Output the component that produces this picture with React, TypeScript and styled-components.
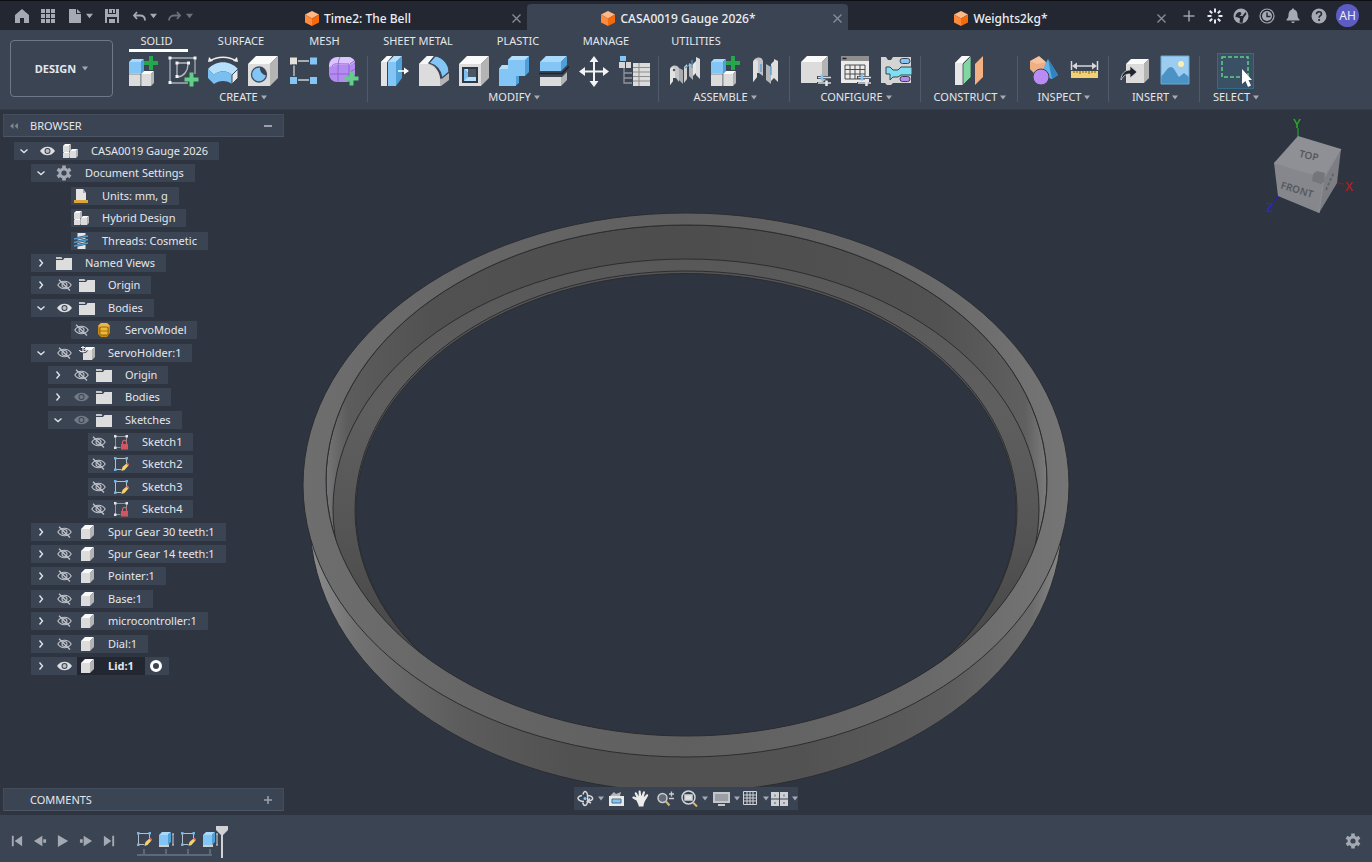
import React from "react";
import styled, { createGlobalStyle, css } from "styled-components";

const c = {
  title: "#222732",
  bar: "#3b4453",
  barLine: "#4c5667",
  stage: "#2e3440",
  text: "#e4e7ec",
  dim: "#a4a9b3",
  blue: "#83c6f6",
  mid: "#dcdcdc",
  shade: "#b4b4b4",
  green: "#5fd086",
};

const GlobalStyle = createGlobalStyle`
  * { box-sizing: border-box; }
  html, body { margin: 0; padding: 0; background: ${c.stage}; }
  body {
    font-family: "Noto Sans", "Open Sans", sans-serif;
    font-size: 12px;
    line-height: 16px;
    color: ${c.text};
  }
  button { font: inherit; color: inherit; background: none; border: 0; padding: 0; cursor: pointer; }
  svg { display: block; flex: none; }
`;

/* ---------- layout ---------- */

const Page = styled.div`
  display: flex;
  flex-direction: column;
  min-height: 100vh;
  overflow: hidden;
`;

const TitleBar = styled.header`
  display: flex;
  height: 30px;
  background: ${c.title};
  border-top: 1px solid #0c0e13;
`;

const QuickAccess = styled.div`
  display: flex;
  align-items: center;
  width: 207px;
  padding-left: 11px;
`;

const TitleButton = styled.button<{ $w: number; $dim?: boolean }>`
  display: flex;
  align-items: center;
  justify-content: center;
  gap: 4px;
  width: ${(p) => p.$w}px;
  height: 28px;
  color: ${(p) => (p.$dim ? "#6c717c" : c.dim)};
`;

const DocTabs = styled.nav`
  flex: 1;
  display: grid;
  grid-template-columns: 320fr 321fr 324fr;
  padding-top: 3px;
`;

const DocTab = styled.div<{ $active?: boolean }>`
  display: flex;
  align-items: center;
  padding-right: 4px;
  color: #eceef2;
  font-weight: 500;
  border-radius: 4px 4px 0 0;
  background: ${(p) => (p.$active ? c.bar : "transparent")};
`;

const DocTitle = styled.button`
  flex: 1;
  display: flex;
  align-items: center;
  justify-content: center;
  gap: 5px;
  padding-top: 3px;
`;

const CloseButton = styled.button`
  width: 14px;
  height: 16px;
  margin-top: 2px;
  display: flex;
  align-items: center;
  justify-content: center;
  color: #868b95;
`;

const Account = styled.div`
  display: flex;
  align-items: center;
  width: 200px;
  padding-left: 4px;
`;

const Avatar = styled.button`
  width: 23px;
  height: 23px;
  margin-left: 4px;
  border-radius: 50%;
  background: #5c5cc4;
  color: #eeeefc;
  text-align: center;
`;

const Ribbon = styled.section`
  display: flex;
  height: 80px;
  background: ${c.bar};
  border-bottom: 1px solid #343c49;
`;

const WorkspaceButton = styled.button`
  width: 103px;
  height: 57px;
  margin: 10px 4px 0 10px;
  border: 1px solid #6d7888;
  border-radius: 4px;
  display: flex;
  align-items: center;
  justify-content: center;
  gap: 6px;
  font-size: 11px;
  font-weight: 700;
`;

const RibbonMain = styled.div`
  flex: 1;
  min-width: 0;
`;

const RibbonTabs = styled.nav`
  display: flex;
  height: 22px;
  padding-left: 12px;
  gap: 16px;
`;

const RibbonTab = styled.button<{ $w: number; $active?: boolean }>`
  width: ${(p) => p.$w}px;
  font-size: 11px;
  line-height: 16px;
  padding: 3px 4px 0 0;
  border-bottom: 3px solid ${(p) => (p.$active ? "#ffffff" : "transparent")};
`;

const ToolGroups = styled.div`
  display: flex;
  padding-top: 1px;
`;

const ToolGroup = styled.div<{ $pad?: number }>`
  padding: 0 ${(p) => (p.$pad ?? 5) - 1}px 0 ${(p) => (p.$pad ?? 5) + 1}px;
  border-right: 1px solid transparent;
  background: linear-gradient(#505a6a, #505a6a) right 3px / 1px 46px no-repeat;
  background-origin: border-box;
  &:last-child { background: none; }
`;

const ToolRow = styled.div`
  display: flex;
`;

const ToolButton = styled.button<{ $active?: boolean }>`
  width: 40px;
  height: 36px;
  display: flex;
  align-items: center;
  justify-content: center;
  ${(p) =>
    p.$active &&
    css`
      width: 37px;
      margin: 0 2px 0 1px;
      background: #3a5165;
      border: 1px solid #316b87;
    `}
`;

const GroupLabel = styled.div`
  margin: 0 -20px;
`;

const GroupMenu = styled.button`
  display: flex;
  align-items: center;
  justify-content: center;
  gap: 3px;
  width: 100%;
  font-size: 11px;
  line-height: 16px;
  white-space: nowrap;
`;

const Workspace = styled.main`
  position: relative;
  flex: 1;
  display: flex;
  flex-direction: column;
  justify-content: space-between;
  min-height: 705px;
  padding: 4px 4px 4px 3px;
  background: ${c.stage};
`;

const Model = styled.svg`
  position: absolute;
  inset: 0;
  width: 100%;
  height: 100%;
`;

const ViewCube = styled.svg`
  position: absolute;
  top: 0;
  right: 0;
`;

const NavBar = styled.div`
  position: absolute;
  left: 50%;
  bottom: 5px;
  transform: translateX(-50%);
  display: flex;
  align-items: center;
  height: 23px;
  background: #3a4352;
`;

const NavButton = styled.button<{ $w: number }>`
  width: ${(p) => p.$w}px;
  height: 23px;
  display: flex;
  align-items: center;
  justify-content: center;
  gap: 4px;
`;

const SidePanel = styled.aside`
  position: relative;
  width: 281px;
`;

const PanelHeader = styled.div`
  display: flex;
  align-items: center;
  height: 23px;
  padding: 0 11px 0 6px;
  background: ${c.bar};
  border: 1px solid #434d5d;
  border-bottom-color: ${c.barLine};
`;

const PanelTitle = styled.h2`
  flex: 1;
  margin: 0 0 0 12px;
  font-size: 11px;
  font-weight: 400;
`;

const PanelButton = styled.button`
  width: 8px;
  height: 16px;
  display: flex;
  align-items: center;
  justify-content: center;
  color: #9aa1ad;
`;

const PanelSpacer = styled.span`
  width: 8px;
`;

const Tree = styled.ul`
  list-style: none;
  padding: 0;
  display: flex;
  flex-direction: column;
  justify-content: space-between;
  min-height: 533px;
  margin: 5px 0 0;
  font-size: 11px;
`;

const Row = styled.li<{ $level: number; $leaf?: boolean }>`
  display: flex;
  align-items: stretch;
  gap: 3px;
  width: max-content;
  height: 18px;
  margin-left: ${(p) => 11 + p.$level * 17 + (p.$leaf ? 23 : 0)}px;
  background: ${c.bar};
`;

const Cell = styled.button`
  width: 20px;
  display: flex;
  align-items: center;
  justify-content: center;
`;

const Item = styled.button<{ $active?: boolean }>`
  display: flex;
  align-items: center;
  padding-right: 11px;
  white-space: nowrap;
  line-height: 18px;
  ${(p) =>
    p.$active &&
    css`
      background: ${c.title};
      font-weight: 700;
    `}
`;

const ItemIcon = styled.span`
  width: 20px;
  margin-right: 11px;
  display: flex;
  justify-content: center;
`;

const ActivateRadio = styled.input`
  appearance: none;
  align-self: center;
  width: 12px;
  height: 12px;
  margin: 0 7px 0 2px;
  border: 3px solid #ffffff;
  border-radius: 50%;
`;

const Timeline = styled.footer`
  display: flex;
  height: 47px;
  padding: 0 8px 0 5px;
  background: ${c.bar};
`;

const PlayButton = styled.button`
  width: 23px;
  height: 24px;
  margin-top: 14px;
  display: flex;
  align-items: center;
  justify-content: center;
  color: ${c.dim};
`;

const Features = styled.div`
  position: relative;
  flex: 1;
  display: flex;
  align-items: flex-start;
  height: 25px;
  margin: 16px 0 0 13px;
  background: linear-gradient(#5d6878, #5d6878) 4px 100% / 75px 2px no-repeat;
`;

const FeatureButton = styled.button`
  width: 22px;
  height: 24px;
  display: flex;
  flex-direction: column;
  align-items: center;
  &::after {
    content: "";
    width: 2px;
    height: 6px;
    margin-top: 2px;
    background: #5d6878;
  }
`;

const Marker = styled.svg`
  position: absolute;
  left: 83px;
  top: -5px;
`;

/* ---------- small glyphs ---------- */

const Caret = ({ s = 6, color = "#a4a9b3" }: { s?: number; color?: string }) => (
  <svg width={s} height={s - 1} viewBox="0 0 6 5"><path d="M0 0.5h6L3 4.5z" fill={color} /></svg>
);

const Plus = ({ x, y, color = c.green, r = 7, t = 2 }: { x: number; y: number; color?: string; r?: number; t?: number }) => (
  <path
    d={`M${x - t} ${y - r}h${2 * t}v${r - t}h${r - t}v${2 * t}h${-(r - t)}v${r - t}h${-2 * t}v${-(r - t)}h${-(r - t)}v${-2 * t}h${r - t}z`}
    fill={color}
  />
);

type BoxProps = { x: number; y: number; w: number; h: number; d: number; blue?: boolean };
const Box = ({ x, y, w, h, d, blue }: BoxProps) => (
  <g>
    <path d={`M${x} ${y + d}h${w - d}v${h - d}h${d - w}z`} fill={blue ? c.blue : c.mid} />
    <path d={`M${x} ${y + d}l${d} ${-d}h${w - d}l${-d} ${d}z`} fill={blue ? "#a9dafb" : "#fafafa"} />
    <path d={`M${x + w - d} ${y + d}l${d} ${-d}v${h - d}l${-d} ${d}z`} fill={blue ? "#4f9fd8" : c.shade} />
  </g>
);

const Tool = ({ children }: { children: React.ReactNode }) => (
  <svg width="32" height="32" viewBox="0 0 32 32">{children}</svg>
);

const OrangeCube = () => (
  <svg width="14" height="15" viewBox="0 0 14 15">
    <path d="M7 0l7 3.5L7 7.5 0 3.5z" fill="#ffb987" />
    <path d="M0 3.5l7 4V15l-7-3.500z" fill="#ff8a3c" />
    <path d="M14 3.5l-7 4V15l7-3.500z" fill="#f56a0b" />
  </svg>
);

const CloseIcon = () => (
  <svg width="9" height="9" viewBox="0 0 9 9"><path d="M.5 .5l8 8M8.500 .5l-8 8" stroke="currentColor" strokeWidth="1.400" /></svg>
);

/* ---------- ribbon icons ---------- */

const NewComponent = () => (
  <Tool>
    <Box x={2} y={4} w={15} h={15} d={3} blue />
    <Box x={2} y={18} w={12} h={13} d={1} />
    <Box x={14} y={16} w={13} h={15} d={3} />
    <path d="M2 19h12M14 19v12" stroke="#6a7280" strokeWidth=".8" />
    <Plus x={24} y={8} color="#25a84c" />
  </Tool>
);

const SketchTool = () => (
  <Tool>
    <path d="M3 3v25h18M3 3h25v16" fill="none" stroke="#a9adb5" strokeWidth="1.300" />
    <path d="M10 8v13M10 8h12M21 9c0 7-4 12-10 13" fill="none" stroke="#b7bbc1" strokeWidth="1.300" />
    <g fill="#f4f4f4">
      <path d="M1.500 1.500h3v3h-3zM26.500 1.500h3v3h-3zM1.500 26h3v3h-3zM8.500 6.500h3v3h-3zM20 6.500h3v3h-3zM8.500 20h3v3h-3z" />
    </g>
    <Plus x={24.5} y={24.5} />
  </Tool>
);

const Revolve = () => (
  <Tool>
    <path d="M3 6C10 1 22 1 29 6" fill="none" stroke="#eee" strokeWidth="1.300" />
    <path d="M1 7l1-5 4 4zM31 7l-1-5-4 4z" fill="#eee" />
    <path d="M1 14C9 5 23 5 31 14l-6 6c-5-5-13-5-18 0z" fill="#b5dffb" />
    <path d="M1 14l6 6v9l-6-6zM7 20c5-5 13-5 18 0v9c-5-4-13-4-18 0z" fill="#79bff2" />
    <path d="M25 20l6-6v9l-6 6z" fill="#e8e8e8" stroke="#3b4453" strokeWidth="1" />
  </Tool>
);

const Hole = () => (
  <Tool>
    <Box x={1} y={1} w={30} h={30} d={8} />
    <circle cx="12" cy="19.500" r="7.500" fill={c.blue} stroke="#46505f" strokeWidth="1.300" />
    <path d="M13 12.100A7.500 7.500 0 0 1 19.400 20.500C15 20 12.500 16 13 12.100z" fill="#3b4453" />
  </Tool>
);

const Pattern = () => (
  <Tool>
    <path d="M7 6h20M7 25h20M7 6v19" stroke="#d0d0d0" strokeWidth="1.300" />
    <path d="M3 2.500h7v7H3z" fill="#e4e0dc" />
    <path d="M23 2.500h7v7h-7zM3 22h7v7H3zM23 22h7v7h-7z" fill={c.blue} />
    <path d="M10.500 4v4M22.500 4v4M10.500 23v4M22.500 23v4M5 10h4M5 21.500h4" stroke="#3b4453" strokeWidth="1" />
  </Tool>
);

const Form = () => (
  <Tool>
    <rect x="2" y="2" width="26" height="25" rx="8" fill="#b48bf0" />
    <path d="M2 12c0-6 4-10 10-10h8c5 0 7 2 8 5l-5 3H9z" fill="#dcc5ff" />
    <path d="M5 11c2-3 4-2 17-2v17M13 2c-2 4-2 8-2 25M3 19h20M23 9l4-3M23 17l5-3" fill="none" stroke="#8f64d0" strokeWidth="1" />
    <Plus x={24.5} y={23.5} />
  </Tool>
);

const PressPull = () => (
  <Tool>
    <path d="M3 7l6-6h5L9 7v24H3z" fill="#e2e2e2" />
    <path d="M3 7l6-6h5L9 7z" fill="#fafafa" />
    <path d="M10 7l6-6h8l-6 6v24h-8z" fill={c.blue} />
    <path d="M10 7l6-6h8l-6 6z" fill="#b5dffb" />
    <path d="M18 7l6-6v22l-6 8z" fill="#4f9fd8" />
    <path d="M20 16h7" stroke="#fff" strokeWidth="1.600" />
    <path d="M26 12.500l5 3.500-5 3.500z" fill="#fff" />
  </Tool>
);

const Fillet = () => (
  <Tool>
    <path d="M1 9l8-8h6l-4 7c6 2 10 8 11 16l9-6v7l-8 6H1z" fill={c.shade} />
    <path d="M1 9h9c7 2 12 8 12 15v7H1z" fill={c.mid} />
    <path d="M1 9l8-8h7l-6 8z" fill="#f6f6f6" />
    <path d="M11 8l6-7c8 1 14 8 14 16l-7 6C23 15 18 10 11 8z" fill={c.blue} stroke="#3b4453" strokeWidth="1.200" />
  </Tool>
);

const Shell = () => (
  <Tool>
    <Box x={1} y={1} w={30} h={30} d={8} />
    <path d="M4 12h16v16H4z" fill="#2f3846" />
    <path d="M6 26V14l4 4v5h8v3z" fill="#79bff2" />
    <path d="M10 14h8v9h-8z" fill="#4a5566" />
    <path d="M6 14h4v4zM6 26l4-4h8v4z" fill="#b5dffb" />
  </Tool>
);

const Combine = () => (
  <Tool>
    <path d="M1 14l3-4h6V5l4-4h17v16l-4 4h-6v7l-4 3H1z" fill="#4f9fd8" />
    <path d="M1 14h9V5h17v16h-9v10H1z" fill={c.blue} />
    <path d="M10 5l4-4h17l-4 4zM1 14l3-4h6v4z" fill="#b5dffb" />
  </Tool>
);

const Split = () => (
  <Tool>
    <Box x={2} y={1} w={27} h={15} d={6} blue />
    <path d="M2 23l0 8h21l6-6v-8l-5 5z" fill={c.shade} />
    <path d="M2 22h21v9H2z" fill={c.mid} />
    <path d="M1 18.500h23l7-7" fill="none" stroke="#1f242d" strokeWidth="1.500" />
  </Tool>
);

const Move = () => (
  <Tool>
    <path d="M16 5v23M4.500 16.500h23" stroke="#f4f4f4" strokeWidth="2" />
    <path d="M16 1l4.500 6h-9zM16 32l4.500-6h-9zM1 16.500l6-4.500v9zM31 16.500l-6-4.500v9z" fill="#f4f4f4" />
  </Tool>
);

const Parameters = () => (
  <Tool>
    <path d="M2 1h6v5H2z" fill={c.blue} />
    <path d="M1 7h6v6H1zM8 7h5v6H8z" fill="#d6d6d6" />
    <path d="M6 13v15h8M6 18h8M6 23h8" fill="none" stroke="#8f959f" strokeWidth="1.300" />
    <path d="M15 8h17v23H15z" fill="#dcdcdc" />
    <path d="M15 12.500h17M15 17h17M15 21.500h17M15 26h17M21 8v23" stroke="#8d8d8d" strokeWidth="1" />
  </Tool>
);

const Joint = () => (
  <Tool>
    <path d="M1 15c0-5 7-6 9-2v14l-3-4H4v3l-3 4z" fill="#c4c6c9" />
    <path d="M1 15c0-3 5-4 5 0v8H4v3l-3 4z" fill="#e2e2e2" />
    <path d="M10 13l4 2v14l-4-4z" fill="#a9abaf" />
    <path d="M15 12l3-3v15l-3 4z" fill="#d0d0d0" />
    <path d="M20 8l4 2v15l-4-4z" fill="#b4b6ba" />
    <path d="M27 2l4 2v20l-4-4z" fill="#dcdcdc" />
    <path d="M24 9l3-3v12l-3 3z" fill="#e8e8e8" />
    <circle cx="5" cy="15" r="1.200" fill="#4a4f58" />
    <path d="M16 13l4-3M23 5v8" stroke="#4f9fd8" strokeWidth="1.200" />
  </Tool>
);

const AsBuiltJoint = () => (
  <Tool>
    <path d="M4 8c0-6 9-8 10-2v15l-4-3H8v4l-4 5z" fill="#c0c2c6" />
    <path d="M4 8c0-4 5-5 5 0v10H8v4l-4 5z" fill="#e0e0e0" />
    <path d="M17 9l5 3v17l-5-4z" fill="#b4b6ba" />
    <path d="M22 9l3-3v17l-3 3zM25 4l4 2v21l-4-4z" fill="#dedede" />
    <path d="M12 9v8M22 11v9" stroke="#4f9fd8" strokeWidth="1.300" />
  </Tool>
);

const Sliders = () => (
  <g>
    <path d="M17 21h14v3H17zM17 27h14v3H17z" fill="#3b4453" />
    <path d="M18 22.500h13M18 28h13" stroke="#d8d8d8" strokeWidth="1.500" />
    <path d="M22 19.500v6" stroke={c.blue} strokeWidth="2.500" />
    <path d="M26.500 25.500v5.500" stroke="#e8e8e8" strokeWidth="2.500" />
  </g>
);

const ConfigureBody = () => (
  <Tool><Box x={1} y={1} w={27} h={27} d={6} /><Sliders /></Tool>
);

const ConfigureTable = () => (
  <Tool>
    <path d="M1 1h28v27H1z" fill="#ebebeb" />
    <path d="M1 1h28v5H1z" fill="#8f8f8f" />
    <path d="M2.500 3.500h4" stroke="#222" strokeWidth="1.500" />
    <path d="M5 10h20v14H5zM5 14.500h20M5 19h20M10 10v14M15 10v14M20 10v14" fill="none" stroke="#4c4c4c" strokeWidth="1" />
    <Sliders />
  </Tool>
);

const ConfigureRules = () => (
  <Tool>
    <path d="M1 2h5l2 3h3l2-3h18v26H13l-2 2H7l-2-2H1z" fill="#d4d4d4" />
    <path d="M6 12h4l3 3h5l3-3h11v8H21l-3 2h-5l-3 3V19H6z" fill="#7fdff0" stroke="#39424f" strokeWidth="1" />
    <rect x="20" y="3.500" width="10" height="5" rx="2.500" fill={c.blue} stroke="#39424f" />
    <rect x="20" y="21.500" width="10" height="5" rx="2.500" fill="#b48bf0" stroke="#39424f" />
  </Tool>
);

const OffsetPlane = () => (
  <Tool>
    <path d="M1 8l7-7h8L9 8v22H1z" fill="#e6e6e6" />
    <path d="M1 8l7-7h8L9 8z" fill="#fbfbfb" />
    <path d="M9 9l8-8v21l-8 8z" fill="#7fd8a0" stroke="#3b4453" strokeWidth=".8" />
    <path d="M21 9l8-8v21l-8 8z" fill="#f2b083" />
  </Tool>
);

const Inspect = () => (
  <Tool>
    <path d="M2 6l9-5 7 6-2 10-9 2-5-5z" fill="#f7c39c" />
    <path d="M2 6l7 3 9-2-2 10-9 2-5-5z" fill="#e8a271" opacity=".6" />
    <path d="M20 4l10 16-6 4-12-4z" fill="#62b2e8" />
    <path d="M20 4l10 16-6 4z" fill="#2f83c0" />
    <circle cx="13" cy="22" r="8" fill="#b98bf3" stroke="#3b4453" strokeWidth="1" />
  </Tool>
);

const Measure = () => (
  <Tool>
    <path d="M3.500 6v9M29.500 6v9M6 11h21" stroke="#d8d8d8" strokeWidth="1.500" />
    <path d="M4 11l5-3.500v7zM29 11l-5-3.500v7z" fill="#d8d8d8" />
    <path d="M3 16h27v7H3z" fill="#f3cf73" />
    <path d="M6 16v2M9 16v2M12 16v3M15 16v2M18 16v2M21 16v3M24 16v2M27 16v2" stroke="#7a5f1c" strokeWidth="1" />
  </Tool>
);

const InsertDerive = () => (
  <Tool>
    <Box x={7} y={4} w={23} h={24} d={5} />
    <path d="M2 25c0-6 4-10 9-10v-4l7 6-7 6v-4c-4 0-6 1-9 6z" fill="#20242c" stroke="#d6d6d6" strokeWidth=".8" />
  </Tool>
);

const InsertCanvas = () => (
  <Tool>
    <path d="M2 1h28v28H2z" fill="#9ccdf0" />
    <circle cx="22" cy="9" r="3" fill="#fbeeb0" />
    <path d="M2 22c5-6 7-10 10-10s5 6 8 10l5-4 5 4v7H2z" fill="#4a93c4" />
    <path d="M2 1h28v28H2z" fill="none" stroke="#69a9d6" strokeWidth="1" />
  </Tool>
);

const SelectIcon = () => (
  <Tool>
    <path d="M2 2h26v20H2z" fill="none" stroke={c.green} strokeWidth="1.500" strokeDasharray="4 2" />
    <path d="M22 14v15l3.500-3 2.500 6 3-1.500-2.500-5.500H32z" fill="#fff" />
  </Tool>
);

const groups: { name: string; pad?: number; active?: boolean; tools: [string, () => React.ReactElement][] }[] = [
  { name: "CREATE", tools: [["New component", NewComponent], ["Create sketch", SketchTool], ["Revolve", Revolve], ["Hole", Hole], ["Rectangular pattern", Pattern], ["Create form", Form]] },
  { name: "MODIFY", tools: [["Press pull", PressPull], ["Fillet", Fillet], ["Shell", Shell], ["Combine", Combine], ["Split body", Split], ["Move", Move], ["Change parameters", Parameters]] },
  { name: "ASSEMBLE", tools: [["Joint", Joint], ["New component", NewComponent], ["As-built joint", AsBuiltJoint]] },
  { name: "CONFIGURE", tools: [["Configure body", ConfigureBody], ["Configuration table", ConfigureTable], ["Configuration rules", ConfigureRules]] },
  { name: "CONSTRUCT", pad: 28, tools: [["Offset plane", OffsetPlane]] },
  { name: "INSPECT", tools: [["Inspect", Inspect], ["Measure", Measure]] },
  { name: "INSERT", tools: [["Insert derive", InsertDerive], ["Canvas", InsertCanvas]] },
  { name: "SELECT", pad: 15, active: true, tools: [["Select", SelectIcon]] },
];

const ribbonTabs: [string, number][] = [
  ["SOLID", 59], ["SURFACE", 78], ["MESH", 57], ["SHEET METAL", 98], ["PLASTIC", 70], ["MANAGE", 74], ["UTILITIES", 74],
];

/* ---------- browser tree icons ---------- */

const Chevron = ({ open }: { open?: boolean }) => (
  <svg width="10" height="10" viewBox="0 0 10 10" fill="none" stroke="#dfe2e6" strokeWidth="1.400">
    <path d={open ? "M1.500 3.500L5 6.500l3.500-3" : "M3.500 1.500L6.500 5l-3 3.500"} />
  </svg>
);

const Eye = ({ kind }: { kind: "on" | "off" | "dim" }) =>
  kind === "off" ? (
    <svg width="15" height="12" viewBox="0 0 15 12" fill="none" stroke="#bfc3ca" strokeWidth="1.100">
      <path d="M.8 6C4 1 11 1 14.200 6 11 11 4 11 .8 6z" />
      <circle cx="7.500" cy="6" r="2.500" />
      <path d="M2 .8l11 10.700" strokeWidth="1.300" />
    </svg>
  ) : (
    <svg width="15" height="12" viewBox="0 0 15 12" fill={kind === "on" ? "#dcdee1" : "#727985"}>
      <path d="M0 6C3.500 .300 11.500 .300 15 6 11.500 11.700 3.500 11.700 0 6z" />
      <circle cx="7.500" cy="6" r="3" fill="#3b4453" />
      <circle cx="7.500" cy="6" r="2" fill={kind === "on" ? "#b9bcc1" : "#727985"} />
    </svg>
  );

const Glyph = ({ children }: { children: React.ReactNode }) => (
  <svg width="16" height="16" viewBox="0 0 16 16">{children}</svg>
);

const Pencil = () => (
  <g>
    <path d="M8.500 15l1-4 4-3.500 2 2-4 4.500z" fill="#f5d36b" />
    <path d="M13 7.500l1.300-1 2 2-1.200 1.300z" fill="#e4636b" />
  </g>
);

const icons: Record<string, React.ReactElement> = {
  assembly: <Glyph><Box x={1} y={1} w={8} h={8} d={2} /><Box x={1} y={9} w={7} h={6} d={1} /><Box x={8} y={6} w={8} h={9} d={2} /></Glyph>,
  gear: (
    <Glyph>
      <g stroke="#a4a9b3" strokeWidth="3.600"><path d="M8 .500v15M1.500 4.250l13 7.500M1.500 11.750l13-7.500" /></g>
      <circle cx="8" cy="8" r="5.500" fill="#a4a9b3" /><circle cx="8" cy="8" r="2.600" fill={c.bar} />
    </Glyph>
  ),
  units: <Glyph><path d="M3 1h7l3 4v7H3z" fill="#e4e4e4" /><path d="M10 1v4h3z" fill="#aaa" /><path d="M1 12h14v3H1z" fill="#dca53a" /></Glyph>,
  threads: (
    <Glyph>
      <path d="M4.500 0h8v16h-8z" fill="#e6e6e6" />
      <path d="M1 6l14-3M1 9.500l14-3M1 13l14-3" stroke="#3b4453" strokeWidth="2.600" />
      <path d="M1 6l14-3M1 9.500l14-3M1 13l14-3" stroke="#4c9ed8" strokeWidth="1.600" />
    </Glyph>
  ),
  folder: <Glyph><path d="M0 2h5.500l1 2H0z" fill="#c4c6ca" /><path d="M0 5h7l1.500-2H16v12H0z" fill="#dddddd" /></Glyph>,
  body: (
    <Glyph>
      <path d="M2 4l3-3h6l3 3v7l-3 4H5l-3-3z" fill="#c98a14" />
      <path d="M2 4l3-3h6l3 3-3 1H5z" fill="#e9b64c" />
      <rect x="4" y="5" width="8" height="8" rx="1.500" fill="#f0b838" stroke="#7e540a" strokeWidth=".8" />
      <path d="M4 9h8" stroke="#a8740f" strokeWidth="1" />
    </Glyph>
  ),
  anchored: (
    <Glyph>
      <Box x={4} y={2} w={12} h={13} d={3} />
      <path d="M4 1v6M2 2.500h4M.5 5c.5 2.500 6.500 2.500 7 0" fill="none" stroke="#2e3440" strokeWidth="2.600" />
      <path d="M4 1v6M2 2.500h4M.5 5c.5 2.500 6.500 2.500 7 0" fill="none" stroke="#f0f0f0" strokeWidth="1.200" />
    </Glyph>
  ),
  component: <Glyph><Box x={2} y={1} w={13} h={14} d={4} /></Glyph>,
  sketchLocked: (
    <Glyph>
      <path d="M2.500 2.500h11v6M2.500 2.500v11h5" fill="none" stroke="#8f959f" strokeWidth="1" />
      <path d="M1 1h2.500v2.500H1zM12.500 1H15v2.500h-2.500zM1 12.500h2.500V15H1z" fill="#e6e6e6" />
      <path d="M9.500 10V8.500c0-3 4-3 4 0V10" fill="none" stroke="#d0666e" strokeWidth="1.200" />
      <path d="M8 10h7v5.500H8z" fill="#d0565f" />
    </Glyph>
  ),
  sketch: (
    <Glyph>
      <path d="M2.500 2.500h11v5M2.500 2.500v11h6" fill="none" stroke="#b9bdc4" strokeWidth="1" />
      <path d="M1 1h2.500v2.500H1zM12.500 1H15v2.500h-2.500zM1 12.500h2.500V15H1z" fill="#6eb5ea" />
      <Pencil />
    </Glyph>
  ),
  extrude: (
    <Glyph>
      <path d="M1 13h10v3H1z" fill="#cfcfcf" />
      <Box x={1} y={1} w={12} h={13} d={3} blue />
      <path d="M15 3v11M14 3h2M14 14h2" stroke="#d0d3d8" strokeWidth="1" />
    </Glyph>
  ),
};

type Node = { label: string; level: number; icon: string; chev?: "open" | "shut"; eye?: "on" | "off" | "dim"; active?: boolean };
const nodes: Node[] = [
  { label: "CASA0019 Gauge 2026", level: 0, icon: "assembly", chev: "open", eye: "on" },
  { label: "Document Settings", level: 1, icon: "gear", chev: "open" },
  { label: "Units: mm, g", level: 2, icon: "units" },
  { label: "Hybrid Design", level: 2, icon: "assembly" },
  { label: "Threads: Cosmetic", level: 2, icon: "threads" },
  { label: "Named Views", level: 1, icon: "folder", chev: "shut" },
  { label: "Origin", level: 1, icon: "folder", chev: "shut", eye: "off" },
  { label: "Bodies", level: 1, icon: "folder", chev: "open", eye: "on" },
  { label: "ServoModel", level: 2, icon: "body", eye: "off" },
  { label: "ServoHolder:1", level: 1, icon: "anchored", chev: "open", eye: "off" },
  { label: "Origin", level: 2, icon: "folder", chev: "shut", eye: "off" },
  { label: "Bodies", level: 2, icon: "folder", chev: "shut", eye: "dim" },
  { label: "Sketches", level: 2, icon: "folder", chev: "open", eye: "dim" },
  { label: "Sketch1", level: 3, icon: "sketchLocked", eye: "off" },
  { label: "Sketch2", level: 3, icon: "sketch", eye: "off" },
  { label: "Sketch3", level: 3, icon: "sketch", eye: "off" },
  { label: "Sketch4", level: 3, icon: "sketchLocked", eye: "off" },
  { label: "Spur Gear 30 teeth:1", level: 1, icon: "component", chev: "shut", eye: "off" },
  { label: "Spur Gear 14 teeth:1", level: 1, icon: "component", chev: "shut", eye: "off" },
  { label: "Pointer:1", level: 1, icon: "component", chev: "shut", eye: "off" },
  { label: "Base:1", level: 1, icon: "component", chev: "shut", eye: "off" },
  { label: "microcontroller:1", level: 1, icon: "component", chev: "shut", eye: "off" },
  { label: "Dial:1", level: 1, icon: "component", chev: "shut", eye: "off" },
  { label: "Lid:1", level: 1, icon: "component", chev: "shut", eye: "on", active: true },
];

/* ---------- stage drawings ---------- */

const LidModel = () => (
  <Model viewBox="0 0 1372 705" preserveAspectRatio="xMidYMid meet" role="img" aria-label="Lid model">
    <defs>
      <linearGradient id="face" x1="0" x2="1" y1="0" y2="0">
        <stop offset="0" stopColor="#6e6e6e" /><stop offset=".25" stopColor="#656565" />
        <stop offset=".5" stopColor="#5f5f5f" /><stop offset=".8" stopColor="#686868" /><stop offset="1" stopColor="#757575" />
      </linearGradient>
      <linearGradient id="side" x1="0" x2="1" y1="0" y2="0">
        <stop offset="0" stopColor="#8c8c8c" /><stop offset=".06" stopColor="#727272" />
        <stop offset=".2" stopColor="#5c5c5c" /><stop offset=".35" stopColor="#515151" />
        <stop offset=".65" stopColor="#525252" /><stop offset=".85" stopColor="#5d5d5d" />
        <stop offset=".96" stopColor="#6c6c6c" /><stop offset="1" stopColor="#888888" />
      </linearGradient>
      <linearGradient id="wall" x1="0" x2="1" y1="0" y2="0">
        <stop offset="0" stopColor="#767676" /><stop offset=".03" stopColor="#5c5c5c" />
        <stop offset=".15" stopColor="#515151" /><stop offset=".5" stopColor="#4d4d4d" />
        <stop offset=".85" stopColor="#525252" /><stop offset=".97" stopColor="#606060" /><stop offset="1" stopColor="#7c7c7c" />
      </linearGradient>
      <linearGradient id="floor" x1="0" x2="0" y1="0" y2="1">
        <stop offset="0" stopColor="#585858" /><stop offset=".3" stopColor="#5f5f5f" />
        <stop offset=".5" stopColor="#575757" /><stop offset=".8" stopColor="#464646" />
      </linearGradient>
      <clipPath id="opening"><ellipse cx="686.500" cy="370.500" rx="360.500" ry="255.500" /></clipPath>
    </defs>
    <g stroke="#2b2d31" strokeWidth="1">
      <ellipse cx="686" cy="411" rx="376" ry="271" fill="url(#side)" />
      <ellipse cx="686" cy="375" rx="383" ry="272" fill="url(#face)" />
      <g clipPath="url(#opening)">
        <ellipse cx="686.500" cy="370.500" rx="360.500" ry="255.500" fill="url(#wall)" />
        <ellipse cx="686" cy="399" rx="353" ry="250" fill="url(#floor)" />
        <ellipse cx="686" cy="400" rx="331" ry="239" fill="#555555" />
        <ellipse cx="686" cy="401" rx="330" ry="237.500" fill={c.stage} />
      </g>
      <ellipse cx="686.500" cy="370.500" rx="360.500" ry="255.500" fill="none" />
    </g>
  </Model>
);

const Cube = () => (
  <ViewCube width="132" height="110" viewBox="0 0 132 110" role="img" aria-label="View cube">
    <path d="M58 27V18" stroke="#1f8f2f" strokeWidth="1.500" />
    <path d="M39 86l-5 5" stroke="#2424a0" strokeWidth="1.500" />
    <path d="M97 73l7 1" stroke="#6f2430" strokeWidth="1.500" />
    <path d="M58 26l43 13-17 29-50-15z" fill="#8e9095" />
    <path d="M34 53l50 15-5 35-41-17z" fill="#85878c" />
    <path d="M101 39l-4 34-18 30 5-35z" fill="#7c7e84" />
    <path d="M34 53l50 15 17-29M84 68l-5 35" fill="none" stroke="#909297" strokeWidth="1" />
    <path d="M73 64l4-3 8 2-1 9-3 2-9-3z" fill="#74767c" />
    <path d="M86 80l8-18" stroke="#62656c" strokeWidth="2" strokeDasharray="3 2" />
    <g fontSize="10" fontWeight="600" fill="#55585f" textAnchor="middle">
      <text transform="translate(68 49) rotate(14)">TOP</text>
      <text transform="translate(56 83) rotate(17)">FRONT</text>
    </g>
    <g fontSize="13" fontWeight="500" textAnchor="middle">
      <text x="57" y="18" fill="#1fb01f">Y</text>
      <text x="109" y="81" fill="#b32020">X</text>
      <text x="30" y="102" fill="#2828d0">Z</text>
    </g>
  </ViewCube>
);

const NavGlyph = ({ children }: { children: React.ReactNode }) => (
  <svg width="17" height="17" viewBox="0 0 17 17">{children}</svg>
);

const navItems: { name: string; w: number; menu?: boolean; art: React.ReactElement }[] = [
  {
    name: "Orbit", w: 32, menu: true,
    art: (
      <g fill="none" stroke="#d6d8dc" strokeWidth="1.500">
        <path d="M6 4.500C6.500 2.500 7.200 1.500 8 1.500c1.500 0 2.700 3 2.700 7s-1.200 7-2.700 7c-1 0-1.800-1-2.300-3" />
        <path d="M5 5.500C-1 6.500 0 11 7 11.500M11 5.500c6 1 6 4.500 1 5.500" /><path d="M13 8.500l-2.500 3 3.500 1.500" />
        <circle cx="8" cy="8.500" r="1.500" fill="#83c6f6" stroke="none" />
      </g>
    ),
  },
  { name: "Look at", w: 21, art: <g><path d="M2 6l4-4 2 2 5-2-1 4z" fill="#b4b6ba" /><path d="M1 6h15v10H1z" fill="#e8e8e8" /><path d="M4 9h9v4H4z" fill="#83c6f6" stroke="#4a6f8a" /></g> },
  {
    name: "Pan", w: 27,
    art: <path d="M4.500 10.500L.8 8.500C-.4 7.400.8 6 2.200 6.500L4.500 7.500 2.800 3.700C2.400 2.300 4.200 1.700 4.800 3L6.800 6.500 6.600 1.500C6.600.2 8.600.2 8.700 1.500L9.200 6.200 11 2c.5-1.200 2.200-.7 1.900.7L11.700 7.200 14.500 4.600c1-.8 2.200.3 1.500 1.400L13 11c-.8 1.600-1.500 3.500-1.500 5.500H6.800c0-2-1.300-3.500-2.300-6z" fill="#ececec" />,
  },
  {
    name: "Zoom", w: 23,
    art: <g fill="none" stroke="#c9ccd1" strokeWidth="1.500"><circle cx="5.500" cy="8" r="4.500" fill="#646c79" /><path d="M12 4h5M14.500 1.500v5M12 8.500h5" strokeWidth="1.300" /><path d="M9 11.500l3.500 4" stroke="#d8b470" strokeWidth="2" /></g>,
  },
  {
    name: "Fit", w: 35, menu: true,
    art: <g fill="none" stroke="#d0d3d8" strokeWidth="1.500"><circle cx="7.500" cy="7.500" r="6.500" /><path d="M4 5h7v5H4z" fill="#e0e0e0" /><path d="M12 12.500l4 4" stroke="#d8b470" strokeWidth="2" /></g>,
  },
  { name: "Display settings", w: 29, menu: true, art: <g><path d="M0 2h17v11H0z" fill="#c4c6ca" /><path d="M2 4h13v7H2z" fill="#9b9ea4" /><path d="M5 14h7v2H5z" fill="#c4c6ca" /></g> },
  { name: "Grid and snaps", w: 29, menu: true, art: <path d="M1.500 1.500h13v13h-13zM5 1.500v13M8 1.500v13M11 1.500v13M1.500 5h13M1.500 8h13M1.500 11h13" fill="none" stroke="#d0d3d8" strokeWidth="1" /> },
  {
    name: "Viewports", w: 28, menu: true,
    art: <g><path d="M0 2h8v6.500H0zM9 2h8v6.500H9zM0 9.500h8V16H0zM9 9.500h8V16H9z" fill="#cfd1d4" /><path d="M3 5.500h2M12 5.500h2M3 13h2M12 13h2" stroke="#92959b" strokeWidth="2" /></g>,
  },
];

const playback: [string, string][] = [
  ["Go to start", "M2 2h2v11H2zM13 2v11L5 7.500z"],
  ["Step back", "M10 2v11L1 7.500zM11 5.500h3v4h-3z"],
  ["Play", "M2 1l11 6.500L2 14z"],
  ["Step forward", "M5 2v11l9-5.500zM1 5.500h3v4H1z"],
  ["Go to end", "M11 2h2v11h-2zM2 2v11l8-5.500z"],
];

const quick: { name: string; w: number; menu?: boolean; dim?: boolean; d: string; stroke?: boolean }[] = [
  { name: "Home", w: 22, d: "M7 0l7 6v8H9V9H5v5H0V6z" },
  { name: "Data panel", w: 30, d: "M0 0h4v4H0zM5 0h4v4H5zM10 0h4v4h-4zM0 5h4v4H0zM5 5h4v4H5zM10 5h4v4h-4zM0 10h4v4H0zM5 10h4v4H5zM10 10h4v4h-4z" },
  { name: "File", w: 34, menu: true, d: "M1 0h7v5h5v9H1zM9 0l4 4H9z" },
  { name: "Save", w: 30, d: "M0 0h3v5h8V0h3v14h-2V8H2v6H0zM4 0h6v4H8V1H7v3H4zM4 10h6v4H4z" },
  { name: "Undo", w: 34, menu: true, stroke: true, d: "M5 3L2 6.500 5 10M2 6.500h6c3 0 5 2 5 5" },
  { name: "Redo", w: 38, menu: true, dim: true, stroke: true, d: "M9 3l3 3.500L9 10M12 6.500H6c-3 0-5 2-5 5" },
];

const accountIcons: { name: string; art: React.ReactElement }[] = [
  { name: "New tab", art: <path d="M8 2.500v11M2.500 8h11" stroke="#9a9fa9" strokeWidth="1.500" /> },
  {
    name: "Extensions",
    art: <g stroke="#e8eaee" strokeWidth="2"><path d="M8 .5v4M8 11.500v4M.5 8h4M11.500 8h4M2.700 2.700l2.500 2.500M10.800 10.800l2.500 2.500M2.700 13.300l2.500-2.500M10.800 5.200l2.500-2.500" /></g>,
  },
  {
    name: "Updates",
    art: <g><circle cx="8" cy="8" r="7.500" fill="#a4a9b3" /><path d="M2.500 9c0-3 2-5 5-5l1 2-2 2h3l3-4 1 2-3 4-1 5-3-.5.5-4-2-1z" fill="#222732" /></g>,
  },
  {
    name: "Job status",
    art: <g fill="none" stroke="#a4a9b3"><circle cx="8" cy="8" r="7" strokeWidth="1.200" /><circle cx="8" cy="8" r="5" fill="#a4a9b3" stroke="none" /><path d="M8 4.500V8.500h3.500" stroke="#222732" strokeWidth="1.400" /></g>,
  },
  { name: "Notifications", art: <path d="M8 .5c1 0 1.300.6 1.300 1.300C12 2.600 12.500 5 12.500 7c0 2 .5 3 2 4.500v1h-13v-1C3 10 3.500 9 3.500 7c0-2 .5-4.400 3.200-5.200C6.700 1.100 7 .5 8 .5zM6.300 13.500h3.400c0 2-3.400 2-3.400 0z" fill="#a4a9b3" /> },
  {
    name: "Help",
    art: <g><circle cx="8" cy="8" r="7.500" fill="#a4a9b3" /><path d="M5.500 6.200c0-3.300 5-3 5-.2 0 1.700-2.400 1.800-2.400 3.700" fill="none" stroke="#222732" strokeWidth="1.600" /><circle cx="8.100" cy="12" r="1.100" fill="#222732" /></g>,
  },
];

const docs = ["Time2: The Bell", "CASA0019 Gauge 2026*", "Weights2kg*"];

export default function App() {
  return (
    <Page>
      <GlobalStyle />
      <TitleBar>
        <QuickAccess>
          {quick.map((q) => (
            <TitleButton key={q.name} $w={q.w} $dim={q.dim} aria-label={q.name}>
              <svg width="14" height="14" viewBox="0 0 14 14" fill={q.stroke ? "none" : "currentColor"} stroke={q.stroke ? "currentColor" : "none"} strokeWidth="1.800">
                <path d={q.d} />
              </svg>
              {q.menu && <Caret s={7} color="currentColor" />}
            </TitleButton>
          ))}
        </QuickAccess>
        <DocTabs>
          {docs.map((d, i) => (
            <DocTab key={d} $active={i === 1}>
              <DocTitle><OrangeCube />{d}</DocTitle>
              <CloseButton aria-label={`Close ${d}`}><CloseIcon /></CloseButton>
            </DocTab>
          ))}
        </DocTabs>
        <Account>
          {accountIcons.map((a) => (
            <TitleButton key={a.name} $w={26} aria-label={a.name}>
              <svg width="16" height="16" viewBox="0 0 16 16">{a.art}</svg>
            </TitleButton>
          ))}
          <Avatar>AH</Avatar>
        </Account>
      </TitleBar>

      <Ribbon>
        <WorkspaceButton>DESIGN <Caret /></WorkspaceButton>
        <RibbonMain>
          <RibbonTabs>
            {ribbonTabs.map(([t, w], i) => (
              <RibbonTab key={t} $w={w} $active={i === 0}>{t}</RibbonTab>
            ))}
          </RibbonTabs>
          <ToolGroups>
            {groups.map((g) => (
              <ToolGroup key={g.name} $pad={g.pad}>
                <ToolRow>
                  {g.tools.map(([name, Icon]) => (
                    <ToolButton key={name} $active={g.active} aria-label={name}><Icon /></ToolButton>
                  ))}
                </ToolRow>
                <GroupLabel><GroupMenu>{g.name}<Caret /></GroupMenu></GroupLabel>
              </ToolGroup>
            ))}
          </ToolGroups>
        </RibbonMain>
      </Ribbon>

      <Workspace>
        <LidModel />
        <Cube />
        <SidePanel>
          <PanelHeader>
            <PanelButton aria-label="Collapse browser">
              <svg width="8" height="6" viewBox="0 0 8 6"><path d="M3.500 0v6L0 3zM8 0v6L4.500 3z" fill="#7d8592" /></svg>
            </PanelButton>
            <PanelTitle>BROWSER</PanelTitle>
            <PanelButton aria-label="Minimize browser">
              <svg width="8" height="8" viewBox="0 0 8 8"><path d="M0 4h8" stroke="currentColor" strokeWidth="2" /></svg>
            </PanelButton>
          </PanelHeader>
          <Tree>
            {nodes.map((n, i) => (
              <Row key={i} $level={n.level} $leaf={!n.chev}>
                {n.chev && <Cell aria-label={`Toggle ${n.label}`}><Chevron open={n.chev === "open"} /></Cell>}
                {n.eye && <Cell aria-label={`Visibility of ${n.label}`}><Eye kind={n.eye} /></Cell>}
                <Item $active={n.active}><ItemIcon>{icons[n.icon]}</ItemIcon>{n.label}</Item>
                {n.active && <ActivateRadio type="radio" name="active" defaultChecked aria-label={`Activate ${n.label}`} />}
              </Row>
            ))}
          </Tree>
        </SidePanel>
        <SidePanel>
          <PanelHeader>
            <PanelSpacer />
            <PanelTitle>COMMENTS</PanelTitle>
            <PanelButton aria-label="Expand comments">
              <svg width="8" height="8" viewBox="0 0 8 8"><path d="M0 4h8M4 0v8" stroke="currentColor" strokeWidth="1.500" /></svg>
            </PanelButton>
          </PanelHeader>
        </SidePanel>
        <NavBar>
          {navItems.map((n) => (
            <NavButton key={n.name} $w={n.w} aria-label={n.name}>
              <NavGlyph>{n.art}</NavGlyph>
              {n.menu && <Caret />}
            </NavButton>
          ))}
        </NavBar>
      </Workspace>

      <Timeline>
        {playback.map(([name, d]) => (
          <PlayButton key={name} aria-label={name}>
            <svg width="14" height="14" viewBox="0 0 15 15"><path d={d} fill="currentColor" /></svg>
          </PlayButton>
        ))}
        <Features>
          {["sketch", "extrude", "sketch", "extrude"].map((f, i) => (
            <FeatureButton key={i} aria-label={`Feature ${i + 1}: ${f}`}>{icons[f]}</FeatureButton>
          ))}
          <Marker width="12" height="32" viewBox="0 0 12 32"><path d="M0 0h12v4L7 9v23H5V9L0 4z" fill="#d0d2d6" /></Marker>
        </Features>
        <PlayButton aria-label="Timeline settings">{icons.gear}</PlayButton>
      </Timeline>
    </Page>
  );
}
